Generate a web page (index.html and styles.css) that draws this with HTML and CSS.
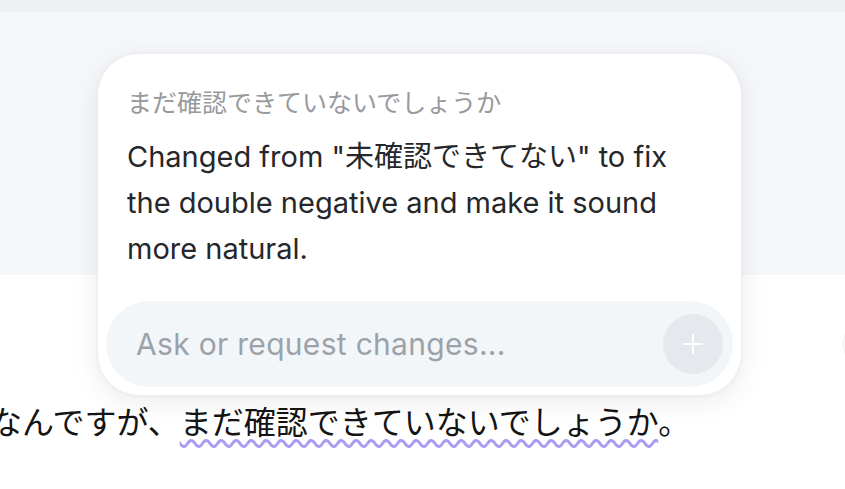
FILE: index.html
```html
<!DOCTYPE html>
<html lang="ja">
<head>
<meta charset="utf-8">
<link rel="stylesheet" href="styles.css">
</head>
<body>
<div class="page">
  <div class="top-band"></div>
  <div class="gray-area"></div>
  <div class="white-area">
    <p class="sentence">なんですが、<span class="flagged">まだ確認できていないでしょうか</span>。</p>
  </div>
  <div class="edge-circle"></div>
  <div class="card">
    <div class="card-title">まだ確認できていないでしょうか</div>
    <div class="card-body">Changed from "未確認できてない" to fix the double negative and make it sound more natural.</div>
    <div class="input-pill">
      <span class="placeholder">Ask or request changes...</span>
      <span class="send-btn">
        <svg width="20" height="20" viewBox="0 0 20 20"><path d="M10 1v18M1 10h18" stroke="#fff" stroke-width="2" stroke-linecap="round" fill="none"/></svg>
      </span>
    </div>
  </div>
</div>
</body>
</html>
```

FILE: styles.css
```css
* { box-sizing: border-box; }
html, body { margin: 0; padding: 0; }
body {
  width: 845px;
  height: 489px;
  overflow: hidden;
  background: #ffffff;
  font-family: Inter, "Noto Sans CJK JP", sans-serif;
}
.page {
  position: relative;
  width: 845px;
  height: 489px;
  display: flex;
  flex-direction: column;
}
.top-band { height: 12px; background: #eef1f4; }
.gray-area { height: 263px; background: #f5f7fa; }
.white-area { flex: 1; background: #ffffff; }
.sentence {
  margin: 0;
  margin-top: 125px;
  margin-left: -10px;
  font-family: "Noto Sans CJK JP", sans-serif;
  font-size: 32px;
  line-height: 40px;
  color: #141414;
  white-space: nowrap;
}
.flagged {
  text-decoration: underline wavy #a99cf2;
  text-decoration-thickness: 2.5px;
  text-underline-offset: 5px;
}
.edge-circle {
  position: absolute;
  left: 843px;
  top: 314px;
  width: 60px;
  height: 60px;
  border-radius: 50%;
  border: 1px solid #eceef1;
  background: #fafbfc;
}
.card {
  position: absolute;
  left: 97px;
  top: 53px;
  width: 645px;
  height: 343px;
  background: #ffffff;
  border: 1px solid #eceef0;
  border-radius: 42px;
  box-shadow: 0 6px 28px rgba(20, 30, 50, 0.08), 0 1px 4px rgba(20, 30, 50, 0.04);
  padding: 31px 8px 8px 8px;
  display: flex;
  flex-direction: column;
}
.card-title {
  padding-left: 21px;
  font-family: "Noto Sans CJK JP", sans-serif;
  font-size: 25px;
  line-height: 32px;
  color: #97999d;
}
.card-body {
  margin-top: 17px;
  padding-left: 21px;
  padding-right: 45px;
  font-size: 29px;
  line-height: 46px;
  color: #26272a;
}
.input-pill {
  margin-top: auto;
  height: 86px;
  background: #f3f6f9;
  border-radius: 43px;
  padding: 0 10px 0 30px;
  display: flex;
  align-items: center;
  justify-content: space-between;
}
.placeholder {
  font-size: 30px;
  color: #9ca2a9;
  letter-spacing: 0.3px;
}
.send-btn {
  width: 60px;
  height: 60px;
  border-radius: 50%;
  background: #e5e9ee;
  display: flex;
  align-items: center;
  justify-content: center;
}
```
